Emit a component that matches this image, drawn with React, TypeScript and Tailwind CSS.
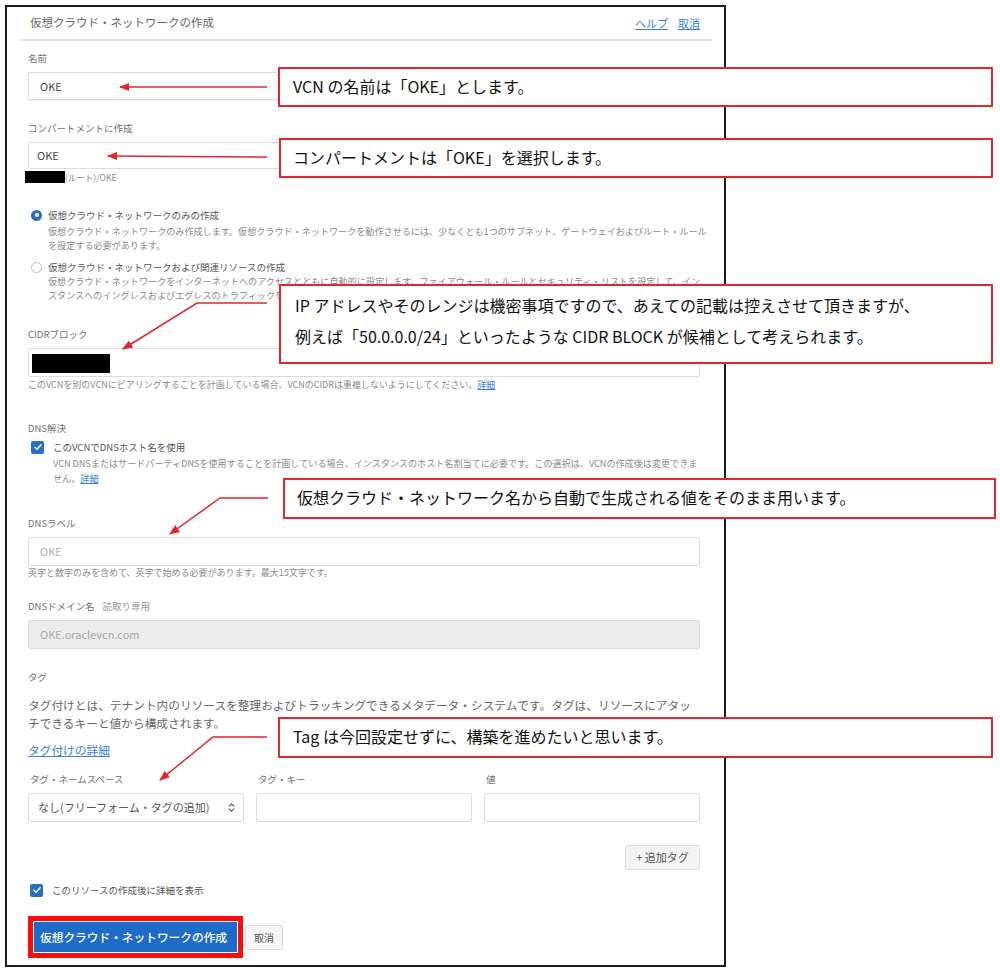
import type { ReactNode } from "react";
import { ChevronsUpDown } from "lucide-react";

function FieldLabel({ children, className = "" }: { children: ReactNode; className?: string }) {
  return <div className={`h-[14px] text-[9.5px] leading-[14px] text-[#707070] ${className}`}>{children}</div>;
}

function CheckBox() {
  return (
    <span className="flex h-[13px] w-[13px] shrink-0 items-center justify-center rounded-[2px] bg-[#2a6fc6]">
      <svg viewBox="0 0 12 12" className="h-[10px] w-[10px]">
        <path d="M2.3 6.3 L4.9 8.7 L9.7 3.4" fill="none" stroke="white" strokeWidth="1.7" strokeLinecap="round" strokeLinejoin="round" />
      </svg>
    </span>
  );
}

function Callout({ className, children }: { className: string; children: ReactNode }) {
  return (
    <div className={`absolute border-2 border-[#e3262b] bg-white text-[16px] leading-[31px] text-[#111] ${className}`}>
      {children}
    </div>
  );
}

export default function App() {
  return (
    <div className="relative h-[978px] w-[1000px] bg-white pl-[5px] pt-[5px] font-['Noto_Sans_CJK_JP','Noto_Sans',sans-serif]">
      <div className="w-[721px] border-2 border-[#1c1c1c] pb-[7px] pl-[21px] pr-[24px]">
        {/* header */}
        <div className="-ml-[8px] -mr-[12px] flex h-[34px] items-center justify-between border-b-2 border-[#e4e4e4] pl-[10px] pr-[12px]">
          <span className="text-[11.5px] text-[#666]">仮想クラウド・ネットワークの作成</span>
          <span className="flex gap-[10px] text-[11px] text-[#3b7fd4] underline">
            <span>ヘルプ</span>
            <span>取消</span>
          </span>
        </div>

        <FieldLabel className="mt-[10px]">名前</FieldLabel>
        <div className="mt-[7px] flex h-[28px] items-center rounded-[2px] border border-[#dcdcdc] pl-[11px] text-[11px] text-[#444] shadow-[0_1px_1px_rgba(0,0,0,0.05)]">
          OKE
        </div>

        <FieldLabel className="mt-[21px]">コンパートメントに作成</FieldLabel>
        <div className="mt-[7px] flex h-[27px] items-center rounded-[2px] border border-[#dcdcdc] pl-[8px] text-[11px] text-[#444]">
          OKE
        </div>
        <div className="mt-[2px] flex h-[12px] items-center">
          <span className="-ml-[3px] h-[12px] w-[40px] bg-black" />
          <span className="text-[8.5px] text-[#888]">(ルート)/OKE</span>
        </div>

        {/* radio options */}
        <div className="mt-[25px] flex h-[14px] items-center pl-[3px]">
          <span className="flex h-[11px] w-[11px] items-center justify-center rounded-full bg-[#2a6fc6]">
            <span className="h-[4px] w-[4px] rounded-full bg-white" />
          </span>
          <span className="ml-[6px] text-[9.5px] text-[#555]">仮想クラウド・ネットワークのみの作成</span>
        </div>
        <div className="mt-[2px] whitespace-nowrap pl-[20px] text-[9.1px] leading-[14px] text-[#8a8a8a]">
          <div>仮想クラウド・ネットワークのみ作成します。仮想クラウド・ネットワークを動作させるには、少なくとも1つのサブネット、ゲートウェイおよびルート・ルール</div>
          <div>を設定する必要があります。</div>
        </div>
        <div className="mt-[8px] flex h-[14px] items-center pl-[3px]">
          <span className="h-[11px] w-[11px] rounded-full border border-[#bdbdbd]" />
          <span className="ml-[6px] text-[9.5px] text-[#555]">仮想クラウド・ネットワークおよび関連リソースの作成</span>
        </div>
        <div className="whitespace-nowrap pl-[20px] text-[9.1px] leading-[14px] text-[#8a8a8a]">
          <div>仮想クラウド・ネットワークをインターネットへのアクセスとともに自動的に設定します。ファイアウォール・ルールとセキュリティ・リストを設定して、イン</div>
          <div>スタンスへのイングレスおよびエグレスのトラフィックを許可します。</div>
        </div>

        <FieldLabel className="mt-[25px]">CIDRブロック</FieldLabel>
        <div className="mt-[7px] flex h-[29px] items-center rounded-[2px] border border-[#dcdcdc] pl-[3px] pt-[2px]">
          <span className="h-[19px] w-[78px] bg-black" />
        </div>
        <div className="mt-[2px] whitespace-nowrap text-[9px] leading-[12px] text-[#8a8a8a]">
          このVCNを別のVCNにピアリングすることを計画している場合、VCNのCIDRは重複しないようにしてください。
          <span className="text-[#3b7fd4] underline">詳細</span>
        </div>

        <FieldLabel className="mt-[30px]">DNS解決</FieldLabel>
        <div className="mt-[5px] flex h-[14px] items-center pl-[3px]">
          <CheckBox />
          <span className="ml-[9px] text-[9.5px] text-[#555]">このVCNでDNSホスト名を使用</span>
        </div>
        <div className="mt-[2px] whitespace-nowrap pl-[25px] text-[9.1px] leading-[15px] text-[#8a8a8a]">
          <div>VCN DNSまたはサードパーティDNSを使用することを計画している場合、インスタンスのホスト名割当てに必要です。この選択は、VCNの作成後は変更できま</div>
          <div>
            せん。<span className="text-[#3b7fd4] underline">詳細</span>
          </div>
        </div>

        <FieldLabel className="mt-[30px]">DNSラベル</FieldLabel>
        <div className="mt-[7px] flex h-[29px] items-center rounded-[2px] border border-[#dcdcdc] pl-[11px] text-[11px] text-[#b0b0b0]">
          OKE
        </div>
        <div className="mt-[1px] text-[9px] leading-[12px] text-[#8a8a8a]">
          英字と数字のみを含めて、英字で始める必要があります。最大15文字です。
        </div>

        <FieldLabel className="mt-[20px]">
          DNSドメイン名<span className="ml-[8px] text-[#999]">読取り専用</span>
        </FieldLabel>
        <div className="mt-[7px] flex h-[29px] items-center rounded-[2px] border border-[#dcdcdc] bg-[#ececec] pl-[11px] text-[11px] text-[#a8a8a8]">
          OKE.oraclevcn.com
        </div>

        <FieldLabel className="mt-[21px]">タグ</FieldLabel>
        <div className="mt-[12px] whitespace-nowrap text-[11.7px] leading-[18px] text-[#666]">
          <div>タグ付けとは、テナント内のリソースを整理およびトラッキングできるメタデータ・システムです。タグは、リソースにアタッ</div>
          <div>チできるキーと値から構成されます。</div>
        </div>
        <div className="mt-[9px] text-[11.7px] leading-[18px] text-[#3b7fd4] underline">タグ付けの詳細</div>

        <div className="mt-[13px] grid grid-cols-3 gap-x-[12px]">
          <FieldLabel className="pl-[2px]">タグ・ネームスペース</FieldLabel>
          <FieldLabel className="pl-[2px]">タグ・キー</FieldLabel>
          <FieldLabel className="pl-[2px]">値</FieldLabel>
          <div className="mt-[7px] flex h-[29px] items-center justify-between rounded-[2px] border border-[#dcdcdc] pl-[9px] pr-[6px] text-[11px] text-[#555]">
            <span>なし(フリーフォーム・タグの追加)</span>
            <ChevronsUpDown className="h-[11px] w-[11px] text-[#555]" strokeWidth={2.4} />
          </div>
          <div className="mt-[7px] h-[29px] rounded-[2px] border border-[#dcdcdc]" />
          <div className="mt-[7px] h-[29px] rounded-[2px] border border-[#dcdcdc]" />
        </div>

        <div className="mt-[23px] flex justify-end">
          <div className="flex h-[25px] w-[75px] items-center justify-center rounded-[2px] border border-[#dedede] bg-[#f3f3f3] text-[11px] text-[#555]">
            + 追加タグ
          </div>
        </div>

        <div className="mt-[13px] flex h-[14px] items-center pl-[2px]">
          <CheckBox />
          <span className="ml-[9px] text-[9.5px] text-[#555]">このリソースの作成後に詳細を表示</span>
        </div>

        <div className="mt-[19px] flex items-center gap-[2px]">
          <div className="w-[215px] border-[5px] border-[#ff0a0a] p-[1px]">
            <div className="flex h-[30px] items-center pl-[6px] text-[11.7px] font-medium text-white bg-[#1f6cc8]">
              仮想クラウド・ネットワークの作成
            </div>
          </div>
          <div className="flex h-[25px] w-[38px] items-center justify-center rounded-[2px] border border-[#dedede] bg-[#f5f5f5] text-[10px] text-[#555]">
            取消
          </div>
        </div>
      </div>

      {/* annotation arrows */}
      <svg className="pointer-events-none absolute left-0 top-0" width="1000" height="978">
        <defs>
          <marker id="ah" viewBox="0 0 10 10" refX="9" refY="5" markerWidth="7" markerHeight="7" orient="auto">
            <path d="M0 1 L10 5 L0 9 Z" fill="#e3262b" />
          </marker>
        </defs>
        <g fill="none" stroke="#e3262b" strokeWidth="1.5">
          <polyline points="267,87 120,87" markerEnd="url(#ah)" />
          <polyline points="267,157 108,156" markerEnd="url(#ah)" />
          <polyline points="267,303 197,303 123,349" markerEnd="url(#ah)" />
          <polyline points="268,498 220,498 170,534" markerEnd="url(#ah)" />
          <polyline points="267,737 213,737 160,780" markerEnd="url(#ah)" />
        </g>
      </svg>

      {/* annotation callouts */}
      <Callout className="left-[278px] top-[67px] h-[40px] w-[715px] pl-[13px] pt-[2px]">VCN の名前は「OKE」とします。</Callout>
      <Callout className="left-[279px] top-[138px] h-[40px] w-[714px] pl-[12px] pt-[2px]">コンパートメントは「OKE」を選択します。</Callout>
      <Callout className="left-[279px] top-[284px] h-[80px] w-[714px] pl-[14px] pt-[4px]">
        <div>IP アドレスやそのレンジは機密事項ですので、あえての記載は控えさせて頂きますが、</div>
        <div>例えば「50.0.0.0/24」といったような CIDR BLOCK が候補として考えられます。</div>
      </Callout>
      <Callout className="left-[283px] top-[478px] h-[41px] w-[713px] pl-[12px] pt-[2px]">仮想クラウド・ネットワーク名から自動で生成される値をそのまま用います。</Callout>
      <Callout className="left-[278px] top-[717px] h-[41px] w-[715px] pl-[13px] pt-[2px]">Tag は今回設定せずに、構築を進めたいと思います。</Callout>
    </div>
  );
}
